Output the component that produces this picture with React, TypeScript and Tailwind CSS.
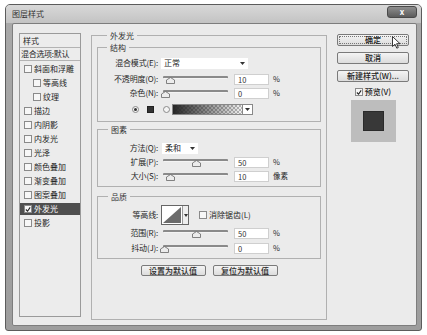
import React from "react";

type Item = { label: string; sub?: boolean; checked?: boolean; selected?: boolean };

const items: Item[] = [
  { label: "斜面和浮雕" },
  { label: "等高线", sub: true },
  { label: "纹理", sub: true },
  { label: "描边" },
  { label: "内阴影" },
  { label: "内发光" },
  { label: "光泽" },
  { label: "颜色叠加" },
  { label: "渐变叠加" },
  { label: "图案叠加" },
  { label: "外发光", checked: true, selected: true },
  { label: "投影" },
];

function Check({ checked = false, className = "" }: { checked?: boolean; className?: string }) {
  return (
    <span
      className={`w-[8px] h-[8px] shrink-0 border border-[#8a8a8a] bg-[#f7f7f7] flex items-center justify-center ${className}`}
    >
      {checked && (
        <svg width="7" height="7" viewBox="0 0 7 7">
          <path d="M1 3.5 L3 5.5 L6 1" fill="none" stroke="#222" strokeWidth="1.3" />
        </svg>
      )}
    </span>
  );
}

function Radio({ on = false }: { on?: boolean }) {
  return (
    <span className="w-[7px] h-[7px] shrink-0 rounded-full border border-[#8a8a8a] bg-[#f4f4f4] flex items-center justify-center">
      {on && <span className="w-[3px] h-[3px] rounded-full bg-[#333]" />}
    </span>
  );
}

function Slider({ pos }: { pos: number }) {
  return (
    <div className="relative w-[65px] h-[12px] shrink-0">
      <div className="absolute left-0 right-0 top-[3px] h-[3px] bg-[#8a8a8a] border-b border-[#f4f4f4] rounded-[1px]" />
      <svg className="absolute top-[4px]" style={{ left: pos - 4 }} width="9" height="7" viewBox="0 0 9 7">
        <path d="M0.5 3 L4.5 0.5 L8.5 3 L8.5 6.5 L0.5 6.5 Z" fill="#ececec" stroke="#666" strokeWidth="0.8" />
      </svg>
    </div>
  );
}

function Field({ value }: { value: string }) {
  return (
    <div className="ml-[6px] w-[35px] h-[11px] shrink-0 bg-white border border-[#cfcfcf] pl-[3px] text-[7.5px] leading-[9px] text-[#333]">
      {value}
    </div>
  );
}

function Select({ value, className }: { value: string; className: string }) {
  return (
    <div className={`h-[11px] bg-white flex items-center justify-between pl-[3px] pr-[3px] text-[8px] leading-[10px] ${className}`}>
      <span>{value}</span>
      <svg width="5" height="3" viewBox="0 0 5 3">
        <path d="M0 0 L5 0 L2.5 3 Z" fill="#333" />
      </svg>
    </div>
  );
}

function Label({ children }: { children: React.ReactNode }) {
  return (
    <span className="w-[60px] shrink-0 text-right text-[8px] leading-[10px] whitespace-nowrap tracking-[-0.2px]">
      {children}
    </span>
  );
}

function SliderRow({ label, pos, value, unit, className = "" }: { label: string; pos: number; value: string; unit: string; className?: string }) {
  return (
    <div className={`h-[12px] flex items-center ${className}`}>
      <Label>{label}</Label>
      <div className="ml-[5px]">
        <Slider pos={pos} />
      </div>
      <Field value={value} />
      <span className="ml-[4px] text-[7.5px] leading-[10px]">{unit}</span>
    </div>
  );
}

// group box caption sitting on the top border line
function Caption({ children, className }: { children: React.ReactNode; className: string }) {
  return (
    <div className={`-mt-[6px] w-fit px-[3px] bg-[#ebebeb] text-[8px] leading-[11px] text-[#333] ${className}`}>
      {children}
    </div>
  );
}

function Btn({ children, focus = false, className = "" }: { children: React.ReactNode; focus?: boolean; className?: string }) {
  return (
    <div
      className={`w-[72px] h-[12px] rounded-[2px] border border-[#7a7a7a] bg-[linear-gradient(to_bottom,#f4f4f4,#dcdcdc)] flex items-center justify-center text-[8px] leading-[10px] font-medium text-[#222] ${className}`}
    >
      <div className={`w-[68px] h-[8px] flex items-center justify-center ${focus ? "border border-dotted border-[#777]" : ""}`}>
        {children}
      </div>
    </div>
  );
}

function LeftPanel() {
  return (
    <div className="ml-[6px] mt-[9px] w-[62px] h-[284px] shrink-0 border border-[#9a9a9a] bg-[#ececec] flex flex-col">
      <div className="h-[14px] border-b border-[#b3b3b3] pl-[3px] text-[8px] leading-[13px]">样式</div>
      <div className="h-[13px] border-b border-[#b3b3b3] pl-[1px] text-[8px] leading-[12px] whitespace-nowrap tracking-[-0.3px]">
        混合选项:默认
      </div>
      <div className="pt-[1px] flex flex-col">
        {items.map((it) => (
          <div key={it.label} className="h-[14px] flex items-center">
            <div
              className={`w-full h-[12px] flex items-center ${it.sub ? "pl-[13px]" : "pl-[4px]"} ${it.selected ? "bg-[#4f4f4f] text-white" : ""}`}
            >
              <Check checked={it.checked} />
              <span className="ml-[2px] text-[8px] leading-[10px] whitespace-nowrap">{it.label}</span>
            </div>
          </div>
        ))}
      </div>
    </div>
  );
}

function Middle() {
  return (
    <div className="ml-[10px] mt-[11px] w-[236px] h-[285px] shrink-0 border border-[#b0b0b0] px-[5px] flex flex-col">
      <Caption className="ml-[10px]">外发光</Caption>

      <div className="mt-[6px] border border-[#b0b0b0] pb-[6px]">
        <Caption className="ml-[9px]">结构</Caption>
        <div className="mt-[4px] h-[12px] flex items-center">
          <Label>混合模式(E):</Label>
          <Select value="正常" className="ml-[3px] w-[87px]" />
        </div>
        <SliderRow className="mt-[4px]" label="不透明度(O):" pos={7} value="10" unit="%" />
        <SliderRow className="mt-[2px]" label="杂色(N):" pos={2} value="0" unit="%" />
        <div className="mt-[4px] h-[12px] flex items-center">
          <span className="ml-[34px]">
            <Radio on />
          </span>
          <span className="ml-[8px] w-[7px] h-[7px] bg-[#333] border border-[#222]" />
          <span className="ml-[9px]">
            <Radio />
          </span>
          <div className="ml-[2px] h-[11px] flex border border-[#888]">
            <div className="w-[69px] h-full [background:linear-gradient(to_right,#262626,#26262600),repeating-conic-gradient(#b4b4b4_0_25%,#f2f2f2_0_50%)_0_0/4px_4px]" />
            <div className="w-[10px] h-full bg-white border-l border-[#888] flex items-center justify-center">
              <svg width="5" height="3" viewBox="0 0 5 3">
                <path d="M0 0 L5 0 L2.5 3 Z" fill="#333" />
              </svg>
            </div>
          </div>
        </div>
      </div>

      <div className="mt-[7px] border border-[#b0b0b0] pb-[4px]">
        <Caption className="ml-[10px]">图素</Caption>
        <div className="mt-[7px] h-[12px] flex items-center">
          <Label>方法(Q):</Label>
          <Select value="柔和" className="ml-[4px] w-[36px]" />
        </div>
        <SliderRow className="mt-[2px]" label="扩展(P):" pos={33} value="50" unit="%" />
        <SliderRow className="mt-[2px]" label="大小(S):" pos={7} value="10" unit="像素" />
      </div>

      <div className="mt-[9px] border border-[#b0b0b0] pb-[4px]">
        <Caption className="ml-[10px]">品质</Caption>
        <div className="mt-[3px] h-[20px] flex items-center">
          <Label>等高线:</Label>
          <div className="ml-[3px] h-[20px] flex border border-[#666] bg-white">
            <svg width="20" height="18" viewBox="0 0 20 18">
              <rect x="0" y="0" width="20" height="18" fill="#fff" />
              <path d="M1 17 L19 1 L19 17 Z" fill="#6b6b6b" />
            </svg>
            <div className="w-[6px] h-full border-l border-[#999] bg-[#eee] flex items-center justify-center">
              <svg width="4" height="3" viewBox="0 0 4 3">
                <path d="M0 0 L4 0 L2 3 Z" fill="#333" />
              </svg>
            </div>
          </div>
          <Check className="ml-[10px]" />
          <span className="ml-[2px] text-[8px] leading-[10px] whitespace-nowrap">消除锯齿(L)</span>
        </div>
        <SliderRow className="mt-[2px]" label="范围(R):" pos={33} value="50" unit="%" />
        <SliderRow className="mt-[3px]" label="抖动(J):" pos={1} value="0" unit="%" />
      </div>

      <div className="mt-[6px] flex justify-center gap-[7px]">
        <div className="w-[65px] h-[11px] rounded-[2px] border border-[#7a7a7a] bg-[linear-gradient(to_bottom,#f4f4f4,#dcdcdc)] flex items-center justify-center text-[8px] leading-[10px] font-medium">
          设置为默认值
        </div>
        <div className="w-[65px] h-[11px] rounded-[2px] border border-[#7a7a7a] bg-[linear-gradient(to_bottom,#f4f4f4,#dcdcdc)] flex items-center justify-center text-[8px] leading-[10px] font-medium">
          复位为默认值
        </div>
      </div>
    </div>
  );
}

function Right() {
  return (
    <div className="ml-[10px] mt-[10px] w-[72px] flex flex-col items-center">
      <Btn focus>确定</Btn>
      <Btn className="mt-[6px]">取消</Btn>
      <Btn className="mt-[6px]">新建样式(W)...</Btn>
      <div className="mt-[5px] h-[10px] flex items-center">
        <Check checked />
        <span className="ml-[2px] text-[8px] leading-[10px] font-medium">预览(V)</span>
      </div>
      <div className="mt-[3px] w-[45px] h-[42px] bg-[#bdbdbd] flex items-center justify-center">
        <div className="w-[21px] h-[20px] bg-[#383838] border border-[#2a2a2a]" />
      </div>
    </div>
  );
}

export default function App() {
  return (
    <div className="relative w-[427px] h-[335px] overflow-hidden bg-white pt-[4px] pl-[5px] font-['Noto_Sans_CJK_SC','Noto_Sans',sans-serif] text-[#262626]">
      <div className="w-[417px] h-[327px] flex flex-col border border-[#5c5c5c] rounded-t-[5px] rounded-b-[3px] bg-[linear-gradient(to_bottom,#a9a9a9,#9d9d9d)]">
        <div className="h-[18px] shrink-0 flex items-center justify-between pl-[6px] pr-[4px] rounded-t-[4px] bg-[linear-gradient(to_bottom,#d8d8d8,#c3c3c3)]">
          <span className="text-[8px] leading-[10px] text-[#333]">图层样式</span>
          <div className="self-start mt-[1px] w-[30px] h-[12px] rounded-[3px] border border-[#4a4a4a] bg-[linear-gradient(to_bottom,#8e8e8e,#5c5c5c)] flex items-center justify-center text-white text-[8px] leading-[8px] font-bold">
            x
          </div>
        </div>
        <div className="ml-[6px] w-[405px] h-[303px] shrink-0 bg-[#ebebeb] border border-[#7d7d7d] rounded-[2px] flex items-start">
          <LeftPanel />
          <Middle />
          <Right />
        </div>
      </div>
      <svg className="absolute left-[392px] top-[36px]" width="9" height="13" viewBox="0 0 9 13">
        <path d="M0.5 0.5 L0.5 10.5 L3 8.2 L4.8 12.2 L6.3 11.5 L4.6 7.7 L8 7.7 Z" fill="#fff" stroke="#222" strokeWidth="0.9" />
      </svg>
    </div>
  );
}
